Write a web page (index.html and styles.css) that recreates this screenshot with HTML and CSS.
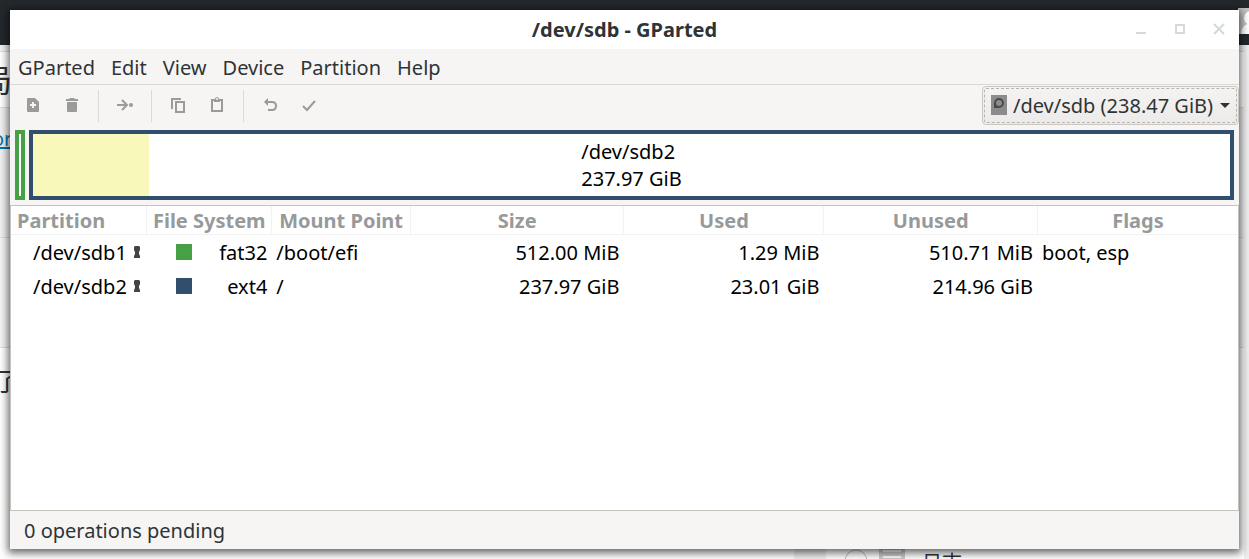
FILE: index.html
```html
<!DOCTYPE html>
<html lang="en">
<head>
    <meta charset="UTF-8">
    <meta name="viewport" content="width=device-width, initial-scale=1.0">
    <title>/dev/sdb - GParted</title>
    <link rel="stylesheet" href="styles.css">
</head>
<body>
    <div class="desktop" aria-hidden="true">
        <div class="admin-bar">
            <svg class="avatar" width="16" height="26" viewBox="0 0 16 26">
                <rect width="16" height="26" fill="#c4c4c4"/>
                <circle cx="13" cy="10" r="7" fill="#fff"/>
                <path d="M3 26c0-7 5-11 13-11v11z" fill="#fff"/>
            </svg>
        </div>
        <div class="page">
            <div class="strip"></div>
            <div class="strip heading"><span>局</span></div>
            <div class="strip links"><a href="#" tabindex="-1">or</a></div>
            <div class="strip pale"></div>
            <div class="strip last"><span>了</span></div>
        </div>
        <div class="page-bottom">
            <div class="block"></div>
            <svg width="62" height="24" viewBox="0 0 62 24">
                <circle cx="13" cy="12" r="11" fill="none" stroke="#b4b9be" stroke-width="1"/>
                <path d="M36 0h26v24H36z" fill="#ccc"/>
                <path d="M40 2h18M40 8h18M40 14h18" stroke="#fff" stroke-width="2"/>
            </svg>
            <span>日志</span>
        </div>
    </div>

    <main class="window">
        <header class="titlebar">
            <h1>/dev/sdb - GParted</h1>
            <div class="controls">
                <button aria-label="Minimize"><svg width="12" height="12" viewBox="0 0 12 12"><path d="M1 10h10" stroke="#d3dadd" stroke-width="2"/></svg></button>
                <button aria-label="Maximize"><svg width="12" height="12" viewBox="0 0 12 12"><path d="M2 2h8v8H2z" fill="none" stroke="#d3dadd" stroke-width="2"/></svg></button>
                <button aria-label="Close"><svg width="12" height="12" viewBox="0 0 12 12"><path d="M1 1l10 10M11 1L1 11" stroke="#d3dadd" stroke-width="2"/></svg></button>
            </div>
        </header>

        <nav class="menubar">
            <button>GParted</button>
            <button>Edit</button>
            <button>View</button>
            <button>Device</button>
            <button>Partition</button>
            <button>Help</button>
        </nav>

        <div class="toolbar">
            <div class="tools">
                <button aria-label="New"><svg width="16" height="16" viewBox="0 0 16 16"><path fill-rule="evenodd" d="M3 1h7l4 4v9q0 1-1 1H3q-1 0-1-1V2q0-1 1-1zM7 5v2H5v2h2v2h2V9h2V7H9V5z"/></svg></button>
                <button aria-label="Delete"><svg width="16" height="16" viewBox="0 0 16 16"><path d="M2 2h3l1-1h4l1 1h3v2H2zM3 5h10v9q0 1-1 1H4q-1 0-1-1z"/></svg></button>
            </div>
            <div class="tools">
                <button aria-label="Resize/Move"><svg width="16" height="16" viewBox="0 0 16 16"><path d="M0 8h9M5 3l5 5-5 5" fill="none" stroke="#9b9b9a" stroke-width="2"/><circle cx="14" cy="8" r="2"/></svg></button>
            </div>
            <div class="tools">
                <button aria-label="Copy"><svg width="16" height="16" viewBox="0 0 16 16"><path d="M2 12V2h9M6 5h8v10H6z" fill="none" stroke="#9b9b9a" stroke-width="2"/></svg></button>
                <button aria-label="Paste"><svg width="16" height="16" viewBox="0 0 16 16"><path d="M3 3h10v11H3z" fill="none" stroke="#9b9b9a" stroke-width="2"/><path d="M5 2h1q0-2 2-2t2 2h1v3H5z"/><circle cx="8" cy="2" r="1" fill="#f6f5f4"/></svg></button>
            </div>
            <div class="tools">
                <button aria-label="Undo"><svg width="16" height="16" viewBox="0 0 16 16"><path d="M5 5h5q4 0 4 4t-4 4H6" fill="none" stroke="#9b9b9a" stroke-width="2"/><path d="M2 5l4-4v8z"/></svg></button>
                <button aria-label="Apply"><svg width="16" height="16" viewBox="0 0 16 16"><path d="M2 9l4 4 8-9" fill="none" stroke="#9b9b9a" stroke-width="2"/></svg></button>
            </div>
            <label class="device">
                <svg class="drive" width="16" height="20" viewBox="0 0 16 20"><path d="M0 0h16v20H0z" fill="#8c8c8c"/><path fill-rule="evenodd" d="M3 13V8a5 5 0 1 1 5 5zM8 5a3 3 0 1 0 0 6 3 3 0 0 0 0-6z" fill="#4a4a4a"/></svg>
                <select aria-label="Device">
                    <option>/dev/sdb (238.47 GiB)</option>
                </select>
                <svg width="10" height="5" viewBox="0 0 10 5"><path d="M0 0h10L5 5z" fill="#2e3436"/></svg>
            </label>
        </div>

        <div class="disk">
            <div class="part fat32"></div>
            <div class="part ext4">
                <div class="used" style="width: 9.67%"></div>
                <div class="part-text">/dev/sdb2<br>237.97 GiB</div>
            </div>
        </div>

        <div class="list">
            <table>
                <colgroup>
                    <col class="col-partition">
                    <col class="col-fs">
                    <col class="col-mount">
                    <col class="col-size">
                    <col class="col-used">
                    <col class="col-unused">
                    <col>
                </colgroup>
                <thead>
                    <tr>
                        <th>Partition</th>
                        <th>File System</th>
                        <th>Mount Point</th>
                        <th>Size</th>
                        <th>Used</th>
                        <th>Unused</th>
                        <th>Flags</th>
                    </tr>
                </thead>
                <tbody>
                    <tr>
                        <td><div class="name">/dev/sdb1 <svg width="8" height="12" viewBox="0 0 8 12"><path d="M2 0h4l1 1v3L6 6v2l1 2v2H1v-2l1-2V6L1 4V1z"/></svg></div></td>
                        <td><div class="fs"><span class="swatch green"></span>fat32</div></td>
                        <td>/boot/efi</td>
                        <td class="num">512.00 MiB</td>
                        <td class="num">1.29 MiB</td>
                        <td class="num">510.71 MiB</td>
                        <td>boot, esp</td>
                    </tr>
                    <tr>
                        <td><div class="name">/dev/sdb2 <svg width="8" height="12" viewBox="0 0 8 12"><path d="M2 0h4l1 1v3L6 6v2l1 2v2H1v-2l1-2V6L1 4V1z"/></svg></div></td>
                        <td><div class="fs"><span class="swatch blue"></span>ext4</div></td>
                        <td>/</td>
                        <td class="num">237.97 GiB</td>
                        <td class="num">23.01 GiB</td>
                        <td class="num">214.96 GiB</td>
                        <td></td>
                    </tr>
                </tbody>
            </table>
        </div>

        <footer class="statusbar">0 operations pending</footer>
    </main>
</body>
</html>
```
FILE: styles.css
```css
* {
    box-sizing: border-box;
}
html {
    height: 100%;
}
body {
    height: 100%;
    margin: 0;
    padding: 10px;
    display: flex;
    overflow: hidden;
    background-color: white;
    color: #2e3436;
    font-family: "Noto Sans", "Noto Sans CJK SC", sans-serif;
    font-size: 20px;
    line-height: 27px;
}
button, select {
    font: inherit;
    color: inherit;
    background: none;
    border: none;
    margin: 0;
    padding: 0;
}
svg {
    display: block;
    flex: none;
}

/* page behind the window */
.desktop {
    position: absolute;
    inset: 0;
    overflow: hidden;
    display: flex;
    flex-direction: column;
}
.admin-bar {
    height: 45px;
    flex: none;
    padding-top: 8px;
    display: flex;
    justify-content: flex-end;
    background-color: #23282d;
}
.avatar {
    margin-right: -5px;
}
.page {
    flex: 1;
    min-height: 0;
    border-right: 5px solid #eee;
}
.strip {
    height: 7px;
    border-bottom: 1px solid #ddd;
    background-color: #f1f1f1;
}
.strip.heading {
    height: 56px;
    padding-top: 12px;
    background-color: white;
    font-size: 32px;
    line-height: 32px;
}
.strip.heading span {
    margin-left: -20px;
}
.strip.links {
    height: 130px;
    padding-top: 17px;
}
.strip.links a {
    color: #0073aa;
    margin-left: -8px;
}
.strip.pale {
    height: 110px;
    background-color: #f5f5f5;
}
.strip.last {
    padding-top: 20px;
    background-color: white;
    border: none;
    font-size: 26px;
}
.strip.last span {
    margin-left: -6px;
}
.page-bottom {
    position: absolute;
    left: 794px;
    top: 549px;
    display: flex;
    gap: 17px;
}
.page-bottom .block {
    width: 32px;
    height: 24px;
    background-color: #eee;
}

.window {
    position: relative;
    flex: 1;
    min-width: 0;
    display: flex;
    flex-direction: column;
    background-color: #f6f5f4;
    box-shadow: 0 2px 8px 2px rgba(0, 0, 0, 0.6);
}

.titlebar {
    height: 39px;
    flex: none;
    display: grid;
    grid-template-columns: 1fr auto 1fr;
    align-items: center;
    background-color: white;
}
.titlebar h1 {
    grid-column: 2;
    margin: 0;
    font-size: 20px;
}
.controls {
    display: flex;
    justify-content: flex-end;
    gap: 27px;
    padding: 0 14px 2px 0;
}

.menubar {
    height: 36px;
    flex: none;
    display: flex;
    align-items: center;
    gap: 16px;
    padding: 2px 8px 0;
    border-bottom: 1px solid #dad9d8;
}

.toolbar {
    height: 41px;
    flex: none;
    display: flex;
    align-items: center;
}
.tools {
    height: 32px;
    display: flex;
    align-items: center;
    gap: 23px;
    padding: 0 18px 2px;
    border-right: 1px solid #d9d9d7;
    fill: #9b9b9a;
}
.tools:first-child {
    padding-left: 15px;
}
.tools:nth-child(4) {
    border-right: none;
}
.device {
    height: 39px;
    margin-left: auto;
    display: flex;
    align-items: center;
    gap: 6px;
    padding: 0 8px;
    border: 1px solid #cdc7c2;
    border-radius: 4px;
    outline: 1px dashed #b5b5b3;
    outline-offset: -3px;
    background: linear-gradient(#f4f3f2, #edebe9);
}
.drive {
    margin-bottom: 2px;
}
.device select {
    appearance: none;
}

.disk {
    flex: none;
    display: flex;
    gap: 4px;
    padding: 4px 5px 5px;
}
.part {
    height: 70px;
    border: 4px solid;
    background-color: white;
}
.fat32 {
    width: 10px;
    border-color: #46a046;
}
.ext4 {
    flex: 1;
    display: grid;
    border-color: #314e6c;
}
.used, .part-text {
    grid-area: 1 / 1;
}
.used {
    background-color: #f8f8ba;
}
.part-text {
    place-self: center;
    color: black;
}

.list {
    flex: 1;
    min-height: 0;
    border: 1px solid #c8c3bc;
    background-color: white;
}
table {
    width: 100%;
    table-layout: fixed;
    border-collapse: separate;
    border-spacing: 0;
    color: black;
}
.col-partition { width: 11.1%; }
.col-fs { width: 10.2%; }
.col-mount { width: 11.3%; }
.col-size { width: 17.4%; }
.col-used { width: 16.3%; }
.col-unused { width: 17.4%; }
th {
    height: 29px;
    padding: 0;
    border-right: 1px solid #f2f2f2;
    border-bottom: 1px solid #f2f2f2;
    color: #979a9b;
}
th:first-child {
    padding-left: 6px;
    text-align: left;
}
th:last-child {
    border-right: none;
}
td {
    height: 34px;
    padding: 0 5px 0 4px;
    white-space: nowrap;
}
.num {
    text-align: right;
}
.name {
    display: flex;
    align-items: center;
    gap: 6px;
    padding-left: 18px;
    fill: #444;
}
.fs {
    display: flex;
    align-items: center;
    justify-content: space-between;
    padding-left: 25px;
}
.swatch {
    width: 16px;
    height: 16px;
}
.green {
    background-color: #46a046;
}
.blue {
    background-color: #314e6c;
}

.statusbar {
    flex: none;
    padding: 6px 14px 5px;
}
```
